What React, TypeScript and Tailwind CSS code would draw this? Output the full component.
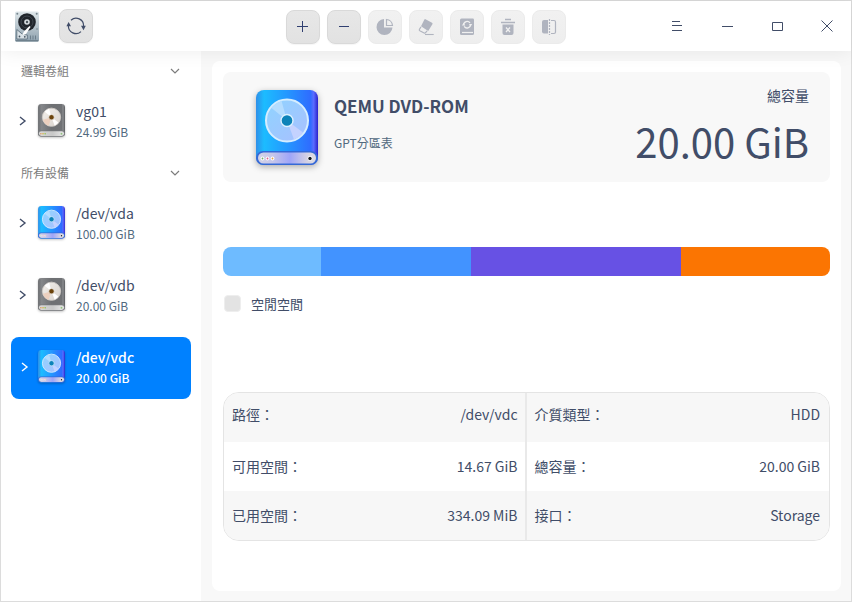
import { useId, type ReactNode } from "react";

type DiskTone = "blue" | "gray";

function DiskIcon({ tone, className }: { tone: DiskTone; className: string }) {
  const id = useId().replace(/[^a-zA-Z0-9]/g, "");
  const blue = tone === "blue";
  return (
    <svg viewBox="0 0 62 76" className={className} aria-hidden="true">
      <defs>
        <linearGradient id={id + "body"} x1="0" x2="1" y1="0" y2="0">
          <stop offset="0" stopColor={blue ? "#2f8fe8" : "#6b6d70"} />
          <stop offset="0.13" stopColor={blue ? "#1cbcff" : "#85878a"} />
          <stop offset="0.5" stopColor={blue ? "#2497ff" : "#6e7073"} />
          <stop offset="0.88" stopColor={blue ? "#2f6cff" : "#707275"} />
          <stop offset="0.93" stopColor={blue ? "#5a6cff" : "#8b8d90"} />
          <stop offset="1" stopColor={blue ? "#2a22cc" : "#525457"} />
        </linearGradient>
        <linearGradient id={id + "base"} x1="0" x2="1" y1="0" y2="0">
          <stop offset="0" stopColor={blue ? "#d3d3e6" : "#dcdcdc"} />
          <stop offset="0.25" stopColor={blue ? "#c6c6ea" : "#cfcfcf"} />
          <stop offset="0.55" stopColor={blue ? "#9fa5f8" : "#c8c8c8"} />
          <stop offset="0.85" stopColor={blue ? "#d5d2e4" : "#dedede"} />
          <stop offset="1" stopColor={blue ? "#dcdce2" : "#e2e2e2"} />
        </linearGradient>
        <linearGradient id={id + "disc"} x1="0" x2="1" y1="0" y2="1">
          <stop offset="0" stopColor={blue ? "#8fd4ff" : "#f3f0ec"} />
          <stop offset="1" stopColor={blue ? "#a9bfff" : "#d9d3cd"} />
        </linearGradient>
      </defs>
      <rect x="0" y="0" width="62" height="75" rx="8" fill={"url(#" + id + "body)"} />
      <rect x="0" y="61" width="62" height="14" rx="7" fill={blue ? "#3569d6" : "#77797c"} />
      <rect x="2" y="62.500" width="58" height="11" rx="5.500" fill={"url(#" + id + "base)"} />
      <circle cx="31" cy="30.500" r="21" fill={"url(#" + id + "disc)"} stroke={blue ? "#d5edff" : "#d0cbc6"} strokeWidth="2" />
      <path d="M31 30.500 15.500 18a20 20 0 0 1 10-7Z" fill={blue ? "#b5ddff" : "#ffffff"} />
      <path d="m31 30.500 16 12a20 20 0 0 1-9 7Z" fill={blue ? "#c4d2ff" : "#ffffff"} />
      {!blue && <path d="M31 30.500 11.500 36a20 20 0 0 0 13 14Z" fill="#ecd0bf" />}
      <circle cx="31" cy="30.500" r="6" fill={blue ? "#0c83b9" : "#6b430b"} stroke={blue ? "#dcf1ff" : "#e5dfd8"} strokeWidth="1.400" />
      <circle cx="6.500" cy="68.500" r="1.900" fill={blue ? "#fff" : "#ff9b72"} />
      <circle cx="11.500" cy="68.500" r="1.900" fill={blue ? "#fff" : "#d8d93c"} />
      <circle cx="16.500" cy="68.500" r="1.900" fill={blue ? "#fff" : "#7ed36a"} />
      <circle cx="6.500" cy="68.500" r="0.900" fill="#74b06a" />
      <circle cx="11.500" cy="68.500" r="0.900" fill="#df5f8f" />
      <circle cx="16.500" cy="68.500" r="0.900" fill="#e0a24a" />
      <circle cx="54" cy="68.500" r="2.400" fill={blue ? "#fff" : "#b8dca9"} />
      <circle cx="54" cy="68.500" r="1.700" fill={blue ? "#171a20" : "#8db97e"} />
    </svg>
  );
}

function AppLogo() {
  return (
    <svg viewBox="0 0 24 31" className="h-[31px] w-6" aria-hidden="true">
      <defs>
        <linearGradient id="logoPlate" x1="0" x2="0" y1="0" y2="1">
          <stop offset="0" stopColor="#dfe7ea" />
          <stop offset="1" stopColor="#8fa2af" />
        </linearGradient>
      </defs>
      <rect x="0" y="0.500" width="24" height="30" rx="1.500" fill="url(#logoPlate)" />
      <rect x="0.500" y="29" width="23" height="1.500" rx="0.700" fill="#6f818d" />
      <g fill="#75848d">
        <circle cx="2.300" cy="2.800" r="1" />
        <circle cx="21.700" cy="2.800" r="1" />
        <circle cx="22" cy="18" r="0.800" />
      </g>
      <circle cx="12" cy="11" r="8.800" fill="#20252b" />
      <circle cx="12" cy="11" r="6" fill="none" stroke="#4c555d" strokeWidth="0.700" />
      <circle cx="12" cy="11" r="2.800" fill="#d7dde0" />
      <circle cx="12" cy="11" r="1.200" fill="#4b545b" />
      <path d="M1.800 18.500v9.500h10.500v-4l-4.500-.5Z" fill="#d9e2e7" stroke="#5f717e" strokeWidth="0.900" />
      <path d="m14.500 15-5.500 5.500-2 4 4-1.500 4.500-7Z" fill="#fff" />
      <circle cx="4.500" cy="25.500" r="0.900" fill="#45535e" />
      <circle cx="9.800" cy="25.800" r="0.900" fill="#45535e" />
      <path d="M15.500 24.500v4M18 24.500v4M20.500 24.500v4" stroke="#6c7e8b" strokeWidth="1" />
    </svg>
  );
}

function Chevron({ down = false }: { down?: boolean }) {
  return (
    <svg viewBox="0 0 10 10" className="size-[10px] shrink-0" fill="none" stroke="currentColor" strokeWidth={down ? "1.200" : "1.400"} aria-hidden="true">
      <path d={down ? "M1 3l4 4 4-4" : "M2 1l5 4-5 4"} />
    </svg>
  );
}

function ToolButton({ label, disabled = false, children }: { label: string; disabled?: boolean; children: ReactNode }) {
  return (
    <button
      type="button"
      aria-label={label}
      disabled={disabled}
      className="flex size-[34px] items-center justify-center rounded-lg border border-[#d9d9d9] bg-linear-to-b from-[#e7e7e7] to-[#e2e2e2] text-[#414d68] shadow-[0_1px_1px_rgba(0,0,0,0.04)] disabled:border-[#ebebeb] disabled:from-[#f1f1f1] disabled:to-[#eeeeee] disabled:text-[#b0b4bf] disabled:shadow-none"
    >
      {children}
    </button>
  );
}

function Glyph({ children }: { children: ReactNode }) {
  return (
    <svg viewBox="0 0 18 18" className="size-[18px]" fill="none" stroke="currentColor" aria-hidden="true">
      {children}
    </svg>
  );
}

function Toolbar() {
  return (
    <div className="flex gap-[7px] pt-0.5">
      <ToolButton label="新建分區">
        <Glyph><path d="M3 8.500h11M8.500 3v11" strokeWidth="1" className="text-[#303f70]" stroke="currentColor" /></Glyph>
      </ToolButton>
      <ToolButton label="刪除">
        <Glyph><path d="M4 8.500h10" strokeWidth="1" className="text-[#303f70]" stroke="currentColor" /></Glyph>
      </ToolButton>
      <ToolButton label="分區" disabled>
        <Glyph>
          <path d="M8 1a8 8 0 1 0 8.500 8.500H8Z" fill="currentColor" stroke="none" />
          <path d="M10.500 1.500v6h6a6.500 6.500 0 0 0-6-6Z" strokeWidth="1.200" />
        </Glyph>
      </ToolButton>
      <ToolButton label="擦除" disabled>
        <Glyph>
          <path d="M8.500 1.200 15 4.800q.9.500.4 1.400l-4.200 6.700-7.200-4.600 3.400-6.700q.4-.9 1.100-.4Z" fill="currentColor" stroke="none" />
          <path d="m4 8.900-1.600 2.500q-.5.900.4 1.400l4.300 2.200q.9.500 1.500-.3l1.500-1.900" strokeWidth="1.100" />
          <path d="M8 16.500h8.700" strokeWidth="1.100" />
        </Glyph>
      </ToolButton>
      <ToolButton label="格式化" disabled>
        <Glyph>
          <path d="M3.500.5h11.300q1.200 0 1.200 1.200v13.800q0 1.500-1.500 1.500h-11Q2 17 2 15.500V2Q2 .5 3.500.5Z" fill="currentColor" stroke="none" />
          <path d="M4 14.500h11" stroke="#f0f0f0" strokeWidth="1.200" />
          <path d="M5.700 6.800A3.400 3.400 0 0 1 12 5M12.500 6.500A3.400 3.400 0 0 1 6.200 8.300" stroke="#f0f0f0" strokeWidth="1.300" />
          <path d="m5.600 4.800 1.600 2.600H4ZM12.600 8.500 11 5.900h3.200Z" fill="#f0f0f0" stroke="none" />
        </Glyph>
      </ToolButton>
      <ToolButton label="卸載" disabled>
        <Glyph>
          <path d="M6 1.500h6M2 4.500h14" strokeWidth="1.500" />
          <path d="M3.500 6.500h11V15q0 2-2 2h-7q-2 0-2-2Z" fill="currentColor" stroke="none" />
          <path d="m7 9.500 4 4.500M11 9.500l-4 4.500" stroke="#f0f0f0" strokeWidth="1.300" />
        </Glyph>
      </ToolButton>
      <ToolButton label="調整" disabled>
        <Glyph>
          <path d="M8 2H4Q2 2 2 4v9.500q0 2 2 2h4Z" fill="currentColor" stroke="none" />
          <path d="M11 2.500h3q1.500 0 1.500 1.500v2M15.500 11.500v2.500q0 1.500-1.500 1.500h-3M15.500 6v6" strokeWidth="1.200" />
          <path d="M9.500 1v16" strokeWidth="1.200" strokeDasharray="2 1" />
        </Glyph>
      </ToolButton>
    </div>
  );
}

function WindowButton({ label, d }: { label: string; d: string }) {
  return (
    <button type="button" aria-label={label} className="flex h-[50px] w-[50px] items-center justify-center text-[#414d68]">
      <svg viewBox="0 0 14 12" className="h-3 w-[14px]" fill="none" stroke="currentColor" aria-hidden="true">
        <path d={d} />
      </svg>
    </button>
  );
}

function TitleBar() {
  return (
    <header className="relative z-10 grid h-[50px] shrink-0 grid-cols-[1fr_auto_1fr] items-center bg-white shadow-[0_0_20px_rgba(0,0,0,0.08)]">
      <div className="flex items-center gap-5 pl-[14px]">
        <AppLogo />
        <ToolButton label="重新整理">
          <svg viewBox="0 0 20 20" className="size-5 shrink-0" fill="none" stroke="currentColor" strokeWidth="1.200" aria-hidden="true">
            <path d="M5 4.200A7.500 7.500 0 0 1 17.600 10M15 15.600A7.500 7.500 0 0 1 2.400 9.800" />
            <path d="M2.600 6 5 10.300H.4ZM17.500 14.200 15 9.800h4.800Z" fill="currentColor" stroke="none" />
          </svg>
        </ToolButton>
      </div>
      <Toolbar />
      <div className="flex justify-end">
        <WindowButton label="選單" d="M3 1.500h8M3 5.500h10M3 10.500h10" />
        <WindowButton label="最小化" d="M3 6.500h11" />
        <WindowButton label="最大化" d="M3.500 2.500h10v8h-10Z" />
        <WindowButton label="關閉" d="M2.500.5l11 11M13.500.5l-11 11" />
      </div>
    </header>
  );
}

type Device = { name: string; size: string; tone: DiskTone; selected?: boolean };

function DeviceItem({ name, size, tone, selected = false }: Device) {
  return (
    <li>
      <button
        type="button"
        aria-pressed={selected}
        className={
          selected
            ? "flex h-[62px] w-full items-center rounded-lg bg-[#0081ff] pb-[3px] pl-[9px] text-left font-medium text-white"
            : "flex h-[62px] w-full items-center rounded-lg pb-[3px] pl-[7px] text-left text-[#414d68]"
        }
      >
        <Chevron />
        <span className={selected ? "ml-2 flex w-[38px]" : "ml-[10px] flex w-[38px]"}>
          <DiskIcon tone={tone} className="h-[33px] w-[27px] drop-shadow-[0_1px_1px_rgba(0,0,0,0.25)]" />
        </span>
        <span className="flex flex-col">
          <span className="text-sm leading-[22px]">{name}</span>
          <span className={selected ? "text-xs leading-5" : "text-xs leading-5 text-[#526a7f]"}>{size}</span>
        </span>
      </button>
    </li>
  );
}

function DeviceSection({ title, devices }: { title: string; devices: Device[] }) {
  return (
    <section>
      <button type="button" className="flex h-10 w-full items-center justify-between pr-[11px] pb-px pl-[10px] text-xs text-[#7c7c7c]">
        <span>{title}</span>
        <Chevron down />
      </button>
      <ul className="flex flex-col gap-[10px]">
        {devices.map((d) => (
          <DeviceItem key={d.name} {...d} />
        ))}
      </ul>
    </section>
  );
}

const groups: Device[] = [{ name: "vg01", size: "24.99 GiB", tone: "gray" }];
const disks: Device[] = [
  { name: "/dev/vda", size: "100.00 GiB", tone: "blue" },
  { name: "/dev/vdb", size: "20.00 GiB", tone: "gray" },
  { name: "/dev/vdc", size: "20.00 GiB", tone: "blue", selected: true },
];

const segments = [
  { share: 98, color: "bg-[#6ebbff]" },
  { share: 150, color: "bg-[#4293ff]" },
  { share: 210, color: "bg-[#6751e4]" },
  { share: 149, color: "bg-[#fb7502]" },
];

const rows = [
  ["路徑：", "/dev/vdc", "介質類型：", "HDD"],
  ["可用空間：", "14.67 GiB", "總容量：", "20.00 GiB"],
  ["已用空間：", "334.09 MiB", "接口：", "Storage"],
];

function DetailTable() {
  return (
    <div className="overflow-hidden rounded-2xl border border-[#e4e4e4]">
      <table className="w-full table-fixed border-separate border-spacing-0 text-sm text-[#414d68]">
        <tbody>
          {rows.map((row) => (
            <tr key={row[0]} className="h-[49px] odd:bg-[#f7f7f7] first:[&>*]:pb-2 [&>*]:pb-0.5">
              <th scope="row" className="pl-2 text-left font-normal">{row[0]}</th>
              <td className="border-r-2 border-[#e9e9e9] pr-[7px] text-right">{row[1]}</td>
              <th scope="row" className="pl-2 text-left font-normal">{row[2]}</th>
              <td className="pr-[9px] text-right">{row[3]}</td>
            </tr>
          ))}
        </tbody>
      </table>
    </div>
  );
}

export default function App() {
  return (
    <div className="flex min-h-screen flex-col border border-[#dcdcdc] bg-white font-['Noto_Sans_CJK_TC',sans-serif]">
      <TitleBar />
      <div className="flex grow">
        <aside className="w-[200px] shrink-0 bg-white px-[10px]">
          <DeviceSection title="邏輯卷組" devices={groups} />
          <DeviceSection title="所有設備" devices={disks} />
        </aside>
        <main className="flex min-w-0 grow flex-col bg-[#f8f8f8] p-[10px] pl-[11px]">
          <div className="grow rounded-lg bg-white p-[11px]">
            <section className="flex min-h-[110px] items-start justify-between rounded-lg bg-[#f8f8f8] pr-[21px] pl-[33px]">
              <div className="flex gap-4">
                <DiskIcon tone="blue" className="mt-[18px] h-[76px] w-[62px] drop-shadow-[0_2px_3px_rgba(0,0,0,0.3)]" />
                <div className="flex flex-col gap-[15px] pt-[22px]">
                  <h1 className="text-[17px] leading-6 font-bold text-[#414d68]">QEMU DVD-ROM</h1>
                  <p className="text-xs leading-5 text-[#526a7f]">GPT分區表</p>
                </div>
              </div>
              <div className="pt-3 text-right text-[#414d68]">
                <p className="text-sm leading-[22px]">總容量</p>
                <p className="text-[40px] leading-[70px]">20.00 GiB</p>
              </div>
            </section>
            <div className="mt-[65px] flex h-[29px] overflow-hidden rounded-lg">
              {segments.map((s) => (
                <div key={s.color} className={s.color} style={{ flexGrow: s.share, flexBasis: 0 }} />
              ))}
            </div>
            <div className="mt-[17px] mb-[78px] flex h-[21px] items-center gap-[10px] pl-px text-[13px] text-[#414d68]">
              <span className="size-[17px] rounded border border-[#eeeeee] bg-[#e3e3e3]" />
              空閒空間
            </div>
            <DetailTable />
          </div>
        </main>
      </div>
    </div>
  );
}
